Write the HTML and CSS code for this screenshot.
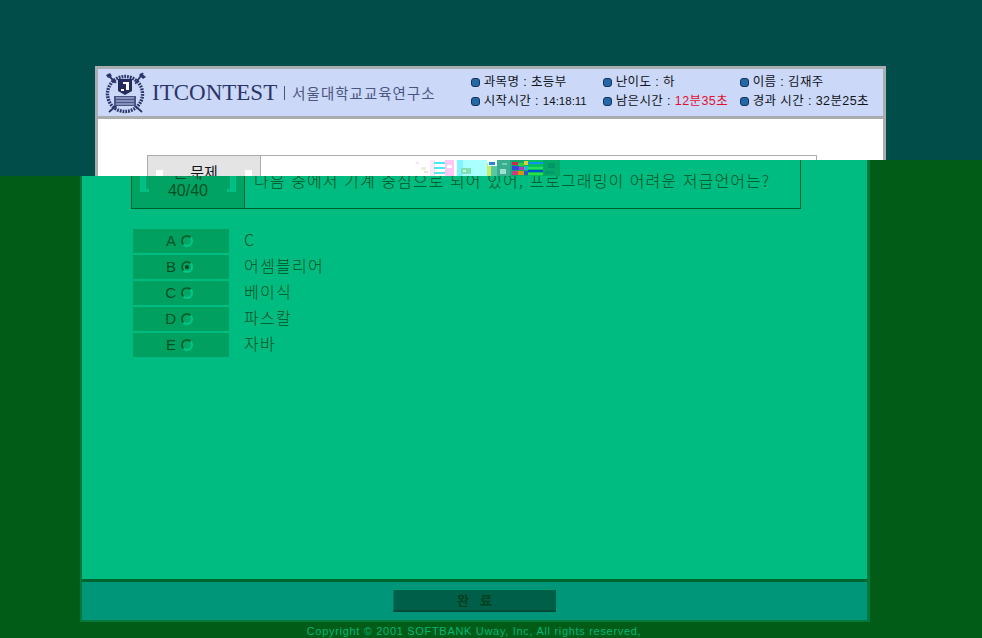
FILE: index.html
```html
<!DOCTYPE html>
<html lang="ko">
<head>
<meta charset="utf-8">
<title>ITCONTEST</title>
<link rel="stylesheet" href="styles.css">
</head>
<body>
<main class="exam">
  <div class="panel">
    <div class="panel-body">
      <div class="question">
        <div class="q-label">
          <span class="bracket bracket-l"></span>
          <div>문제</div>
          <div>40/40</div>
          <span class="bracket bracket-r"></span>
        </div>
        <div class="q-text">다음 중에서 기계 중심으로 되어 있어, 프로그래밍이 어려운 저급언어는?</div>
      </div>
      <div class="options">
        <div class="option"><div class="opt-key">A<span class="radio"></span></div><div class="opt-text">C</div></div>
        <div class="option"><div class="opt-key">B<span class="radio radio-on"></span></div><div class="opt-text">어셈블리어</div></div>
        <div class="option"><div class="opt-key">C<span class="radio"></span></div><div class="opt-text">베이식</div></div>
        <div class="option"><div class="opt-key">D<span class="radio"></span></div><div class="opt-text">파스칼</div></div>
        <div class="option"><div class="opt-key">E<span class="radio"></span></div><div class="opt-text">자바</div></div>
      </div>
    </div>
    <div class="panel-foot"><button class="done">완 &nbsp; 료</button></div>
  </div>
  <p class="copyright">Copyright © 2001 SOFTBANK Uway, Inc, All rights reserved,</p>
</main>

<section class="stale">
  <div class="window">
    <header class="head">
      <svg class="emblem" viewBox="0 0 44 42" width="44" height="42">
        <circle cx="21" cy="22" r="17.5" fill="none" stroke="#2b3569" stroke-width="3.4" stroke-dasharray="1.8 1"/>
        <path d="M4 3 L13 12 M39 1 L31 12 M5 40 L13 33 M38 40 L30 33" stroke="#2b3569" stroke-width="1.8"/>
        <path d="M37 1 L42 5 L39 7 L35 3 Z M2 3 L6 1 L8 4 L4 6 Z" fill="#2b3569"/>
        <circle cx="21" cy="22" r="14.5" fill="#cbd8f8"/>
        <path d="M14 7 H28 V19 L21 23 L14 19 Z" fill="#232c5e"/>
        <path d="M19 10 H25 V18 H22 V12 H19 Z M17 17 H20 V19 H17 Z" fill="#fff"/>
        <path d="M10 24 H32 V34 H10 Z" fill="#4a5488"/>
        <path d="M12 26 H30 M12 29 H30 M12 32 H30" stroke="#c4cde8" stroke-width="1"/>
      </svg>
      <span class="brand">ITCONTEST</span>
      <span class="org">서울대학교교육연구소</span>
      <div class="info">
        <div class="info-item"><i class="dot"></i>과목명 : 초등부</div>
        <div class="info-item"><i class="dot"></i>난이도 : 하</div>
        <div class="info-item"><i class="dot"></i>이름 : 김재주</div>
        <div class="info-item"><i class="dot"></i>시작시간 : <span class="clock">14:18:11</span></div>
        <div class="info-item"><i class="dot"></i>남은시간 : <span class="red">12분35초</span></div>
        <div class="info-item"><i class="dot"></i>경과 시간 : 32분25초</div>
      </div>
    </header>
    <div class="stale-body">
      <div class="stale-table">
        <div class="stale-label"><span class="tick tick-l"></span>문제<span class="tick tick-r"></span></div>
        <div class="stale-cell"></div>
      </div>
    </div>
  </div>
  <svg class="noise" viewBox="0 0 145 16" width="145" height="16" shape-rendering="crispEdges">
    <rect x="0" y="2" width="3" height="2" fill="#f4e6f6"/><rect x="5" y="7" width="5" height="3" fill="#f0ece0"/><rect x="8" y="11" width="4" height="2" fill="#e8e8d0"/>
    <rect x="14" y="0" width="5" height="16" fill="#fde8fa"/>
    <rect x="19" y="0" width="10" height="16" fill="#ffffff"/>
    <rect x="18" y="2" width="12" height="2" fill="#40f0f0"/><rect x="18" y="7" width="11" height="2" fill="#50e8f0"/><rect x="18" y="12" width="12" height="2" fill="#60e8e8"/>
    <rect x="29" y="0" width="9" height="16" fill="#ffc8f4"/><rect x="31" y="5" width="5" height="3" fill="#fff"/>
    <rect x="38" y="0" width="3" height="16" fill="#fff"/>
    <rect x="41" y="0" width="30" height="16" fill="#aaffff"/><rect x="41" y="0" width="6" height="16" fill="#80f4ff"/>
    <rect x="45" y="8" width="10" height="6" fill="#7fe0b0"/><rect x="47" y="10" width="3" height="2" fill="#d0fff0"/>
    <rect x="71" y="3" width="4" height="13" fill="#c4ee60"/>
    <rect x="72" y="0" width="9" height="6" fill="#f0fff8"/><rect x="73" y="2" width="6" height="3" fill="#3080e0"/>
    <rect x="75" y="6" width="6" height="10" fill="#58c8a0"/>
    <rect x="81" y="0" width="13" height="16" fill="#38ad90"/><rect x="84" y="9" width="6" height="5" fill="#a0e0d0"/><rect x="86" y="3" width="5" height="2" fill="#70d0b0"/>
    <rect x="94" y="0" width="2" height="16" fill="#20a880"/>
    <rect x="96" y="0" width="16" height="16" fill="#10a870"/>
    <rect x="96" y="2" width="6" height="3" fill="#d02848"/><rect x="102" y="3" width="6" height="3" fill="#30d040"/><rect x="108" y="1" width="4" height="4" fill="#e0d030"/>
    <rect x="96" y="6" width="7" height="4" fill="#3048e0"/><rect x="103" y="7" width="5" height="3" fill="#c038b0"/><rect x="108" y="6" width="4" height="4" fill="#20b8d8"/>
    <rect x="96" y="11" width="6" height="4" fill="#d03880"/><rect x="102" y="11" width="6" height="4" fill="#d09808"/><rect x="108" y="11" width="4" height="4" fill="#2858d8"/>
    <rect x="112" y="0" width="15" height="16" fill="#00c060"/>
    <rect x="112" y="2" width="15" height="2" fill="#1090f0"/><rect x="112" y="7" width="15" height="2" fill="#20e060"/><rect x="112" y="10" width="15" height="2" fill="#0050d0"/><rect x="112" y="13" width="15" height="2" fill="#30e040"/>
    <rect x="127" y="0" width="18" height="16" fill="#06a868"/><rect x="132" y="3" width="7" height="5" fill="#00966a"/><rect x="129" y="11" width="9" height="3" fill="#00986e"/>
  </svg>
</section>
</body>
</html>
```

FILE: styles.css
```css
* { box-sizing: border-box; }
html, body { margin: 0; height: 100%; }
body {
  position: relative;
  overflow: hidden;
  background: #005c16;
  font-family: "Noto Sans CJK KR", "Liberation Sans", sans-serif;
}

/* lower, current screen */
.exam { padding: 120px 112px 0 80px; }
.panel {
  height: 502px;
  display: flex;
  flex-direction: column;
  border: 2px solid #007a3c;
  border-width: 0 3px 2px 2px;
  background: #00bc80;
}
.panel-body { flex: 1; padding: 36px 0 0 49px; }
.question {
  width: 670px;
  height: 53px;
  display: flex;
  border: 1px solid #00602a;
  color: #004f22;
}
.q-label {
  position: relative;
  width: 113px;
  flex: none;
  border-right: 1px solid #00602a;
  background: #00a364;
  text-align: center;
  font: 16px/18px "Liberation Sans", "Noto Sans CJK KR", sans-serif;
  padding-top: 7px;
}
.bracket {
  position: absolute;
  top: 0;
  width: 9px;
  height: 35px;
  border-bottom: 3px solid #00c084;
}
.bracket-l { left: 8px; border-left: 6px solid #00c084; }
.bracket-r { right: 8px; border-right: 6px solid #00c084; }
.q-text {
  padding: 13px 0 0 9px;
  font-size: 16px;
  line-height: 20px;
  font-weight: 300;
  letter-spacing: 1.08px;
  white-space: nowrap;
}
.options {
  display: flex;
  flex-direction: column;
  gap: 2px;
  margin: 20px 0 0 2px;
}
.option { display: flex; height: 24px; align-items: center; color: #004f22; }
.opt-key {
  width: 96px;
  height: 24px;
  background: #00a060;
  display: flex;
  align-items: center;
  justify-content: flex-end;
  gap: 5px;
  padding-right: 36px;
  font: 15px/24px "Liberation Sans", sans-serif;
}
.radio {
  width: 12px;
  height: 12px;
  border-radius: 50%;
  border: 2px solid #00c888;
  border-top-color: #00602a;
  border-left-color: #00602a;
  background: #00a868;
  display: flex;
  align-items: center;
  justify-content: center;
}
.radio-on::after {
  content: "";
  width: 4px;
  height: 4px;
  border-radius: 50%;
  background: #00401c;
}
.opt-text {
  margin-left: 15px;
  margin-top: -4px;
  font-size: 16px;
  font-weight: 300;
  letter-spacing: 1.3px;
  line-height: 24px;
}
.panel-foot {
  height: 41px;
  flex: none;
  border-top: 3px solid #00642e;
  background: #00967a;
  padding: 7px 0 0 311px;
}
.done {
  display: block;
  width: 163px;
  height: 23px;
  padding: 0;
  border: 1px solid #005a40;
  border-top-color: #00a070;
  border-left-color: #007d60;
  border-bottom: 2px solid #004a38;
  background: #005f49;
  color: #00401c;
  font: bold 13px/20px "Noto Sans CJK KR", sans-serif;
}
.copyright {
  margin: 2px 0 0;
  width: 788px;
  text-align: center;
  color: #00b878;
  font: 11px/14px "Liberation Sans", sans-serif;
  letter-spacing: .69px;
  white-space: nowrap;
}

/* upper, not yet repainted part of the previous screen */
.stale {
  position: absolute;
  top: 0;
  left: 0;
  width: 982px;
  height: 176px;
  padding: 66px 0 0 95px;
  background: #004d4a;
  clip-path: polygon(0 0, 982px 0, 982px 160px, 560px 160px, 560px 176px, 0 176px);
}
.window {
  width: 791px;
  height: 110px;
  border: solid #a9adb0;
  border-width: 3px 3px 0 3px;
  background: #fff;
}
.head {
  height: 50px;
  display: flex;
  align-items: center;
  position: relative;
  background: #cbd8f8;
  border-bottom: 3px solid #a9adb0;
  padding-left: 6px;
  color: #101418;
}
.emblem { flex: none; margin-top: 1px; }
.brand {
  margin-left: 4px;
  font: 23px/26px "Liberation Serif", serif;
  color: #2b3569;
  white-space: nowrap;
}
.org {
  margin-left: 7px;
  padding-left: 7px;
  border-left: 1px solid #4a5580;
  height: 14px;
  display: flex;
  align-items: center;
  font-size: 14.4px;
  letter-spacing: 1.1px;
  color: #4a5580;
  white-space: nowrap;
}
.info {
  margin-left: 35px;
  display: grid;
  grid-template-columns: 132px 137px 140px;
  grid-auto-rows: 19px;
  margin-top: -2px;
  font-family: "Liberation Sans", "Noto Sans CJK KR", sans-serif;
  font-size: 12.5px;
  line-height: 19px;
  letter-spacing: .4px;
  white-space: nowrap;
}
.info-item { display: flex; align-items: center; white-space: pre; }
.dot {
  width: 9px;
  height: 9px;
  margin-right: 4px;
  border-radius: 3px;
  border: 1px solid #12345c;
  background: #2468a8;
}
.red { color: #e01030; }
.clock { font-size: 11.5px; letter-spacing: 0; }
.stale-body { padding: 36px 0 0 49px; }
.stale-table {
  width: 670px;
  height: 30px;
  display: flex;
  border: 1px solid #a9adb0;
  border-bottom: 0;
}
.stale-label {
  position: relative;
  width: 113px;
  flex: none;
  border-right: 1px solid #a9adb0;
  background: #e4e4e4;
  text-align: center;
  font-size: 15px;
  line-height: 18px;
  padding-top: 7px;
  color: #101418;
}
.tick { position: absolute; top: 14px; width: 7px; height: 8px; background: #fff; }
.tick-l { left: 8px; }
.tick-r { right: 8px; }
.noise { position: absolute; left: 416px; top: 160px; }
```
